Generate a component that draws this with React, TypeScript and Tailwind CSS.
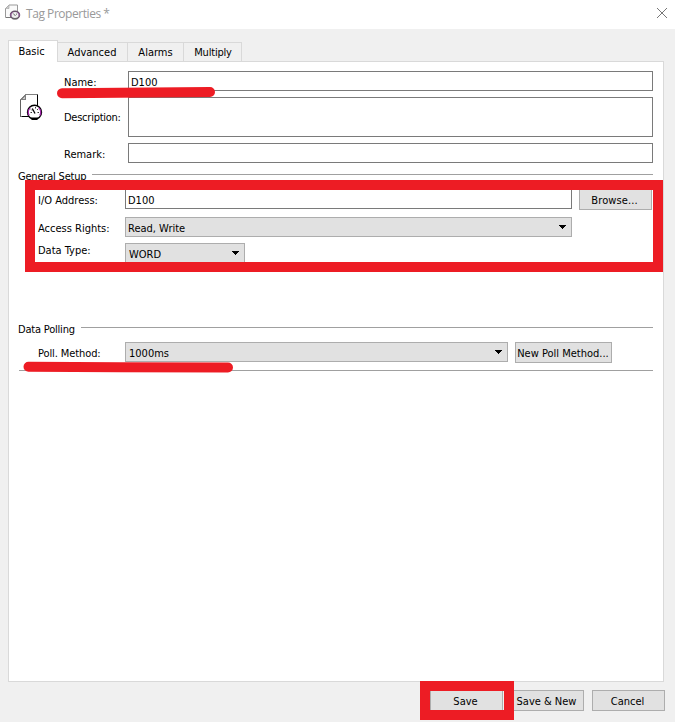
import clsx from 'clsx';
import type { ReactNode } from 'react';

// ── Icons ────────────────────────────────────────────────────────────────────

function TagIcon() {
  return (
    <svg viewBox="0 0 24 27" className="h-[27px] w-6" shapeRendering="crispEdges">
      <path d="M0 6 6 0H17V22H0Z" fill="#fff" />
      <path d="M.5 5.5V22.5H9M17.5 0V12" fill="none" stroke="#606060" />
      <path d="M17.5 1V12M2 22.5H9" fill="none" stroke="#000" />
      <path d="M.5 6 6 .5H17" fill="none" stroke="#808080" />
      <path d="M1.5 5.5H5.5V1.5Z" fill="#c8c8c8" stroke="#808080" />
      <g shapeRendering="auto">
        <circle cx="14.5" cy="18.3" r="7" fill="#fff" stroke="#000" strokeWidth="1.4" />
        <path
          d="M9.2 21.4A6 6 0 0 1 10.3 13.9M18.7 13.9A6 6 0 0 1 19.8 21.4"
          fill="none"
          stroke="#a020a8"
          strokeWidth="1.2"
        />
        <path d="M12.3 14.5 15 19.5" stroke="#000" strokeWidth="1.3" />
        <path
          d="M15.5 13V14.5M10.5 18.5H12M17.5 18.5H19M17 16 18 15M11 15.5 12 16.5"
          stroke="#222"
          strokeWidth=".9"
        />
        <path d="M10.5 23.5H18.5L17 26H12Z" fill="#000" />
      </g>
    </svg>
  );
}

function SmallTagIcon() {
  return (
    <svg viewBox="0 0 16 16" className="h-4 w-4">
      <path d="M.5 4.5 4 1H12.5V13.5H.5Z" fill="#fafafa" stroke="#999" />
      <path d="M.5 4.5H4V1Z" fill="#ccc" stroke="#aaa" strokeWidth=".7" />
      <path d="M1 13.5H6" stroke="#777" />
      <ellipse cx="10" cy="11" rx="4.5" ry="3.7" fill="#eee" stroke="#665068" strokeWidth="1.5" />
      <path d="M6 12.2A4 3.2 0 0 1 8 8.3M12 8.3A4 3.2 0 0 1 14 12.2" fill="none" stroke="#965a9e" />
      <path d="M8.3 9.5 10.5 12M11 10.5 12 9.8" stroke="#666" />
      <path d="M7.5 14H12.5V15.3H7.5Z" fill="#666" />
    </svg>
  );
}

function CloseIcon() {
  return (
    <svg viewBox="0 0 10 10" className="h-[10px] w-[10px]">
      <path d="M0 0 10 10M10 0 0 10" stroke="#777" strokeWidth="1" />
    </svg>
  );
}

function Arrow() {
  return (
    <svg viewBox="0 0 7 4" className="mb-px h-1 w-[7px]" shapeRendering="crispEdges">
      <path d="M0 0H7V1H6V2H5V3H4V4H3V3H2V2H1V1H0Z" fill="#000" />
    </svg>
  );
}

// ── Controls ─────────────────────────────────────────────────────────────────

function Label({ children, className }: { children: ReactNode; className?: string }) {
  return <label className={clsx('shrink-0 whitespace-nowrap', className)}>{children}</label>;
}

function Field({ value, className }: { value?: string; className?: string }) {
  return (
    <div className={clsx('flex shrink-0 items-center border border-[#7a7a7a] bg-white pl-0.5', className)}>
      {value}
    </div>
  );
}

function Combo({ value, className }: { value: string; className?: string }) {
  return (
    <div
      className={clsx(
        'flex shrink-0 items-center justify-between border border-[#adadad] bg-[#e1e1e1] pr-[5px]',
        className,
      )}
    >
      <span className="pt-1">{value}</span>
      <Arrow />
    </div>
  );
}

function Button({ children, className }: { children: ReactNode; className?: string }) {
  return (
    <button
      className={clsx(
        'flex shrink-0 items-center justify-center whitespace-nowrap border border-[#adadad] bg-[#e1e1e1] pt-[3px]',
        className,
      )}
    >
      {children}
    </button>
  );
}

function Tab({ children, className }: { children: ReactNode; className?: string }) {
  return (
    <div
      className={clsx(
        'flex h-[19px] items-center justify-center border-t border-r border-[#d9d9d9] bg-[#f0f0f0] pt-0.5',
        className,
      )}
    >
      {children}
    </div>
  );
}

function SectionTitle({ children }: { children: ReactNode }) {
  return (
    <div className="flex h-4 items-center gap-[6px]">
      <span className="pt-0.5 tracking-[-0.2px] whitespace-nowrap">{children}</span>
      <span className="mb-[3px] h-px flex-1 bg-[#a0a0a0]" />
    </div>
  );
}

// ── App ──────────────────────────────────────────────────────────────────────

export default function App() {
  return (
    <div className="relative flex h-[722px] w-[675px] flex-col overflow-hidden bg-[#f0f0f0] font-['DejaVu_Sans_Condensed','DejaVu_Sans',sans-serif] text-[11px] leading-[14px] text-black">
      <header className="flex h-[29px] shrink-0 items-center bg-white pr-[8px] pl-[5px]">
        <span className="mb-[5px]">
          <SmallTagIcon />
        </span>
        <span className="mb-[2px] ml-[5px] flex-1 font-['Open_Sans',sans-serif] text-[12px] tracking-[-0.45px] text-[#999]">
          Tag Properties *
        </span>
        <span className="mb-[3px]">
          <CloseIcon />
        </span>
      </header>

      <nav className="ml-2 flex h-8 shrink-0 items-end">
        <div className="relative z-10 -mb-px flex h-[22px] w-[50px] items-center justify-center border border-b-0 border-[#d9d9d9] bg-white pr-[3px]">
          Basic
        </div>
        <Tab className="w-[70px] pr-px">Advanced</Tab>
        <Tab className="w-[56px]">Alarms</Tab>
        <Tab className="w-[58px] pl-px tracking-[-0.2px]">Multiply</Tab>
      </nav>

      <main className="ml-2 flex h-[621px] w-[656px] shrink-0 flex-col border border-[#d9d9d9] bg-white pt-[9px] pr-[10px] pl-[9px]">
        <div className="flex h-[92px]">
          <div className="w-[46px] shrink-0 pt-[23px] pl-[2px]">
            <TagIcon />
          </div>
          <div className="flex flex-col gap-[6px]">
            <div className="flex items-center">
              <Label className="w-16 pt-1">Name:</Label>
              <Field value="D100" className="h-5 w-[525px] pt-1" />
            </div>
            <div className="flex items-center">
              <Label className="w-16 pt-0.5 tracking-[-0.25px]">Description:</Label>
              <Field className="h-10 w-[525px]" />
            </div>
            <div className="flex items-center">
              <Label className="w-16 pt-1">Remark:</Label>
              <Field className="h-5 w-[525px]" />
            </div>
          </div>
        </div>

        <section className="mt-[5px] h-[153px] shrink-0">
          <SectionTitle>General Setup</SectionTitle>
          <div className="mt-[5px] flex items-start pl-5">
            <Label className="w-[87px] pt-[5px]">I/O Address:</Label>
            <Field value="D100" className="h-5 w-[447px] pt-1" />
            <Button className="ml-[7px] h-[21px] w-[73px] pr-0.5 tracking-[0.1px]">Browse...</Button>
          </div>
          <div className="mt-[7px] flex items-center pl-5">
            <Label className="w-[87px] pt-1">Access Rights:</Label>
            <Combo value="Read, Write" className="h-5 w-[447px] pl-0.5" />
          </div>
          <div className="mt-[6px] flex items-center pl-5">
            <Label className="mb-[5px] w-[87px]">Data Type:</Label>
            <Combo value="WORD" className="h-5 w-[120px] pl-[3px]" />
          </div>
        </section>

        <section className="shrink-0">
          <SectionTitle>Data Polling</SectionTitle>
          <div className="mt-[5px] flex items-start pl-5">
            <Label className="w-[87px] pt-[5px] tracking-[-0.1px]">Poll. Method:</Label>
            <Combo value="1000ms" className="h-5 w-[383px] pl-[3px]" />
            <Button className="ml-[7px] h-[21px] w-[97px] pr-px">New Poll Method...</Button>
          </div>
          <div className="mt-[7px] ml-px h-px bg-[#a0a0a0]" />
        </section>
      </main>

      <footer className="mt-2 flex pl-[430px]">
        <Button className="h-[21px] w-[73px] pr-[2px]">Save</Button>
        <Button className="ml-[5px] h-[21px] w-[76px] pl-px">Save &amp; New</Button>
        <Button className="ml-2 h-[21px] w-[73px] pr-[2px]">Cancel</Button>
      </footer>

      {/* Red markings lying over the dialog */}
      <div className="absolute top-[180px] left-[25px] z-20 h-[92px] w-[638px] border-10 border-[#ed1c24]" />
      <div className="absolute top-[681px] left-[420px] z-20 h-[39px] w-[94px] border-10 border-[#ed1c24]" />
      <svg viewBox="0 0 675 722" className="pointer-events-none absolute inset-0 z-20 h-[722px] w-[675px]">
        <g fill="none" stroke="#ed1c24" strokeWidth="10" strokeLinecap="round">
          <path d="M62 93.2 120 92.8 210 92" />
          <path d="M28.5 366.7 120 367.2 228 367.5" />
        </g>
      </svg>
    </div>
  );
}
